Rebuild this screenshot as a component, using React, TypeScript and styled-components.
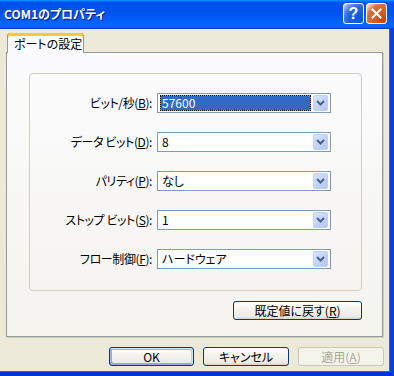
import React from "react";
import styled, { createGlobalStyle } from "styled-components";

const GlobalStyle = createGlobalStyle`
  html, body { margin: 0; padding: 0; background: #ece9d8; }
  body {
    font-family: "Noto Sans CJK JP", "Liberation Sans", sans-serif;
    font-size: 12px;
    font-feature-settings: "palt" 1;
  }
`;

const Window = styled.div`
  width: 394px;
  height: 376px;
  overflow: hidden;
  display: flex;
  flex-direction: column;
`;

const TitleBar = styled.div`
  height: 29px;
  flex: none;
  display: flex;
  align-items: center;
  justify-content: space-between;
  padding: 0 7px 0 4px;
  background: linear-gradient(180deg, #0997ff, #0053ee 8%, #0050ee 40%, #0066ff 88%, #0066ff 93%, #005bff 95%, #003dd7 96%, #003dd7);
`;

const Title = styled.span`
  color: #fff;
  font-weight: bold;
  font-size: 12px;
  text-shadow: 1px 1px #0f1089;
  line-height: 1;
  margin-top: -1px;
`;

const CaptionButtons = styled.div`
  display: flex;
  gap: 2px;
  margin-top: -2px;
`;

const CaptionButton = styled.div<{ $kind: "help" | "close" }>`
  width: 21px;
  height: 21px;
  box-sizing: border-box;
  border: 1px solid #fff;
  border-radius: 3px;
  display: flex;
  align-items: center;
  justify-content: center;
  color: #fff;
  font-family: "Liberation Sans", sans-serif;
  font-weight: bold;
  font-size: 16px;
  background: ${(p) =>
    p.$kind === "help"
      ? "radial-gradient(circle at 90% 90%, #0054e9 0%, #2263d5 55%, #4479e4 70%, #a3bbec 90%, #fff 100%)"
      : "radial-gradient(circle at 90% 90%, #cc4600 0%, #dc6527 55%, #cd7546 70%, #ffccb2 90%, #fff 100%)"};
`;

const Frame = styled.div`
  flex: 1;
  display: flex;
  flex-direction: column;
  background: #ece9d8;
  padding: 4px 6px 0 6px;
  border-right: 4px solid #0841d8;
  border-bottom: 4px solid #0831d9;
  box-shadow: inset -1px -1px #166aee;
`;

const TabStrip = styled.div`
  display: flex;
  padding-left: 1px;
  position: relative;
  z-index: 1;
  height: 19px;
`;

const Tab = styled.div`
  width: 77px;
  height: 20px;
  box-sizing: border-box;
  border: 1px solid #919b9c;
  border-top: none;
  border-bottom: none;
  border-radius: 3px 3px 0 0;
  background: #fcfcfe;
  box-shadow: inset 0 3px #ffc73c, inset 0 1px #e68b2c;
  padding-top: 3px;
  padding-left: 6px;
  line-height: 15px;
  white-space: nowrap;
  color: #000;
`;

const TabPanel = styled.div`
  width: 377px;
  height: 285px;
  box-sizing: border-box;
  border: 1px solid #919b9c;
  background: linear-gradient(180deg, #fcfcfe, #f4f3ee);
  box-shadow: 1px 1px #d0cebf;
  padding: 20px 20px 0 22px;
  display: flex;
  flex-direction: column;
`;

const GroupBox = styled.div`
  width: 333px;
  height: 218px;
  box-sizing: border-box;
  border: 1px solid #d0d0bf;
  border-radius: 4px;
  padding-top: 19px;
  display: flex;
  flex-direction: column;
  gap: 19px;
`;

const FieldRow = styled.div`
  display: grid;
  grid-template-columns: 122px 174px;
  column-gap: 5px;
  align-items: center;
  height: 20px;
`;

const Label = styled.span`
  text-align: right;
  color: #000;
  white-space: pre;
  line-height: 20px;
  letter-spacing: -0.4px;
`;

const Combo = styled.div`
  height: 20px;
  box-sizing: border-box;
  border: 1px solid #7f9db9;
  background: #fff;
  display: flex;
  align-items: center;
  padding: 1px 1px 1px 2px;
  gap: 2px;
`;

const ComboText = styled.div<{ $selected?: boolean }>`
  flex: 1;
  height: 16px;
  box-sizing: border-box;
  padding-left: 1px;
  line-height: 14px;
  white-space: nowrap;
  border: 1px solid transparent;
  color: ${(p) => (p.$selected ? "#fff" : "#000")};
  background: ${(p) =>
    p.$selected
      ? "linear-gradient(#316ac5, #316ac5) padding-box, #d99b3a border-box"
      : "transparent"};
  border-style: ${(p) => (p.$selected ? "dotted" : "solid")};
  border-color: ${(p) => (p.$selected ? "#000" : "transparent")};
`;

const ComboButton = styled.div`
  width: 15px;
  height: 16px;
  box-sizing: border-box;
  border-radius: 2px;
  border: 1px solid #bfd0f8;
  background: linear-gradient(135deg, #dbe6fe 0%, #c3d4fb 50%, #b1c6f5 100%);
  display: flex;
  align-items: center;
  justify-content: center;
  margin-right: 1px;
`;

const RestoreRow = styled.div`
  display: flex;
  justify-content: flex-end;
  width: 333px;
  margin-top: 10px;
`;

const PushButton = styled.div<{ $w: number; $default?: boolean; $disabled?: boolean }>`
  width: ${(p) => p.$w}px;
  height: 19px;
  box-sizing: border-box;
  border: 1px solid ${(p) => (p.$disabled ? "#c9c7ba" : "#003c74")};
  border-radius: 3px;
  background: ${(p) =>
    p.$disabled
      ? "#f5f4ea"
      : "linear-gradient(180deg, #ffffff 0%, #f4f3ee 40%, #ecebe6 86%, #d6d0c5 100%)"};
  box-shadow: ${(p) =>
    p.$default
      ? "inset -1px 1px #cee7ff, inset 1px 2px #98b8ea, inset -2px 2px #bcd4f6, inset 1px -1px #89ade4, inset 2px -2px #89ade4"
      : "none"};
  color: ${(p) => (p.$disabled ? "#aca899" : "#000")};
  display: flex;
  align-items: center;
  justify-content: center;
  line-height: 1;
  white-space: nowrap;
`;

const ButtonBar = styled.div`
  display: flex;
  justify-content: flex-end;
  gap: 9px;
  margin-top: 10px;
`;

const Chevron = () => (
  <svg width="9" height="6" viewBox="0 0 9 6">
    <path d="M1 1 L4.5 4.5 L8 1" fill="none" stroke="#4d6185" strokeWidth="2" />
  </svg>
);

const CloseX = () => (
  <svg width="11" height="11" viewBox="0 0 11 11">
    <path d="M1.5 1.5 L9.5 9.5 M9.5 1.5 L1.5 9.5" stroke="#fff" strokeWidth="2" strokeLinecap="square" />
  </svg>
);

const rows = [
  { label: "ビット/秒(", key: "B", value: "57600", selected: true },
  { label: "データ ビット(", key: "D", value: "8" },
  { label: "パリティ(", key: "P", value: "なし" },
  { label: "ストップ ビット(", key: "S", value: "1" },
  { label: "フロー制御(", key: "F", value: "ハードウェア" },
];

export default function App() {
  return (
    <>
      <GlobalStyle />
      <Window>
        <TitleBar>
          <Title>COM1のプロパティ</Title>
          <CaptionButtons>
            <CaptionButton $kind="help">?</CaptionButton>
            <CaptionButton $kind="close">
              <CloseX />
            </CaptionButton>
          </CaptionButtons>
        </TitleBar>
        <Frame>
          <TabStrip>
            <Tab>ポートの設定</Tab>
          </TabStrip>
          <TabPanel>
            <GroupBox>
              {rows.map((r) => (
                <FieldRow key={r.key}>
                  <Label>
                    {r.label}
                    <u>{r.key}</u>):
                  </Label>
                  <Combo>
                    <ComboText $selected={r.selected}>{r.value}</ComboText>
                    <ComboButton>
                      <Chevron />
                    </ComboButton>
                  </Combo>
                </FieldRow>
              ))}
            </GroupBox>
            <RestoreRow>
              <PushButton $w={129}>
                既定値に戻す(<u>R</u>)
              </PushButton>
            </RestoreRow>
          </TabPanel>
          <ButtonBar>
            <PushButton $w={85} $default>
              OK
            </PushButton>
            <PushButton $w={86}>キャンセル</PushButton>
            <PushButton $w={86} $disabled>
              適用(<u>A</u>)
            </PushButton>
          </ButtonBar>
        </Frame>
      </Window>
    </>
  );
}
